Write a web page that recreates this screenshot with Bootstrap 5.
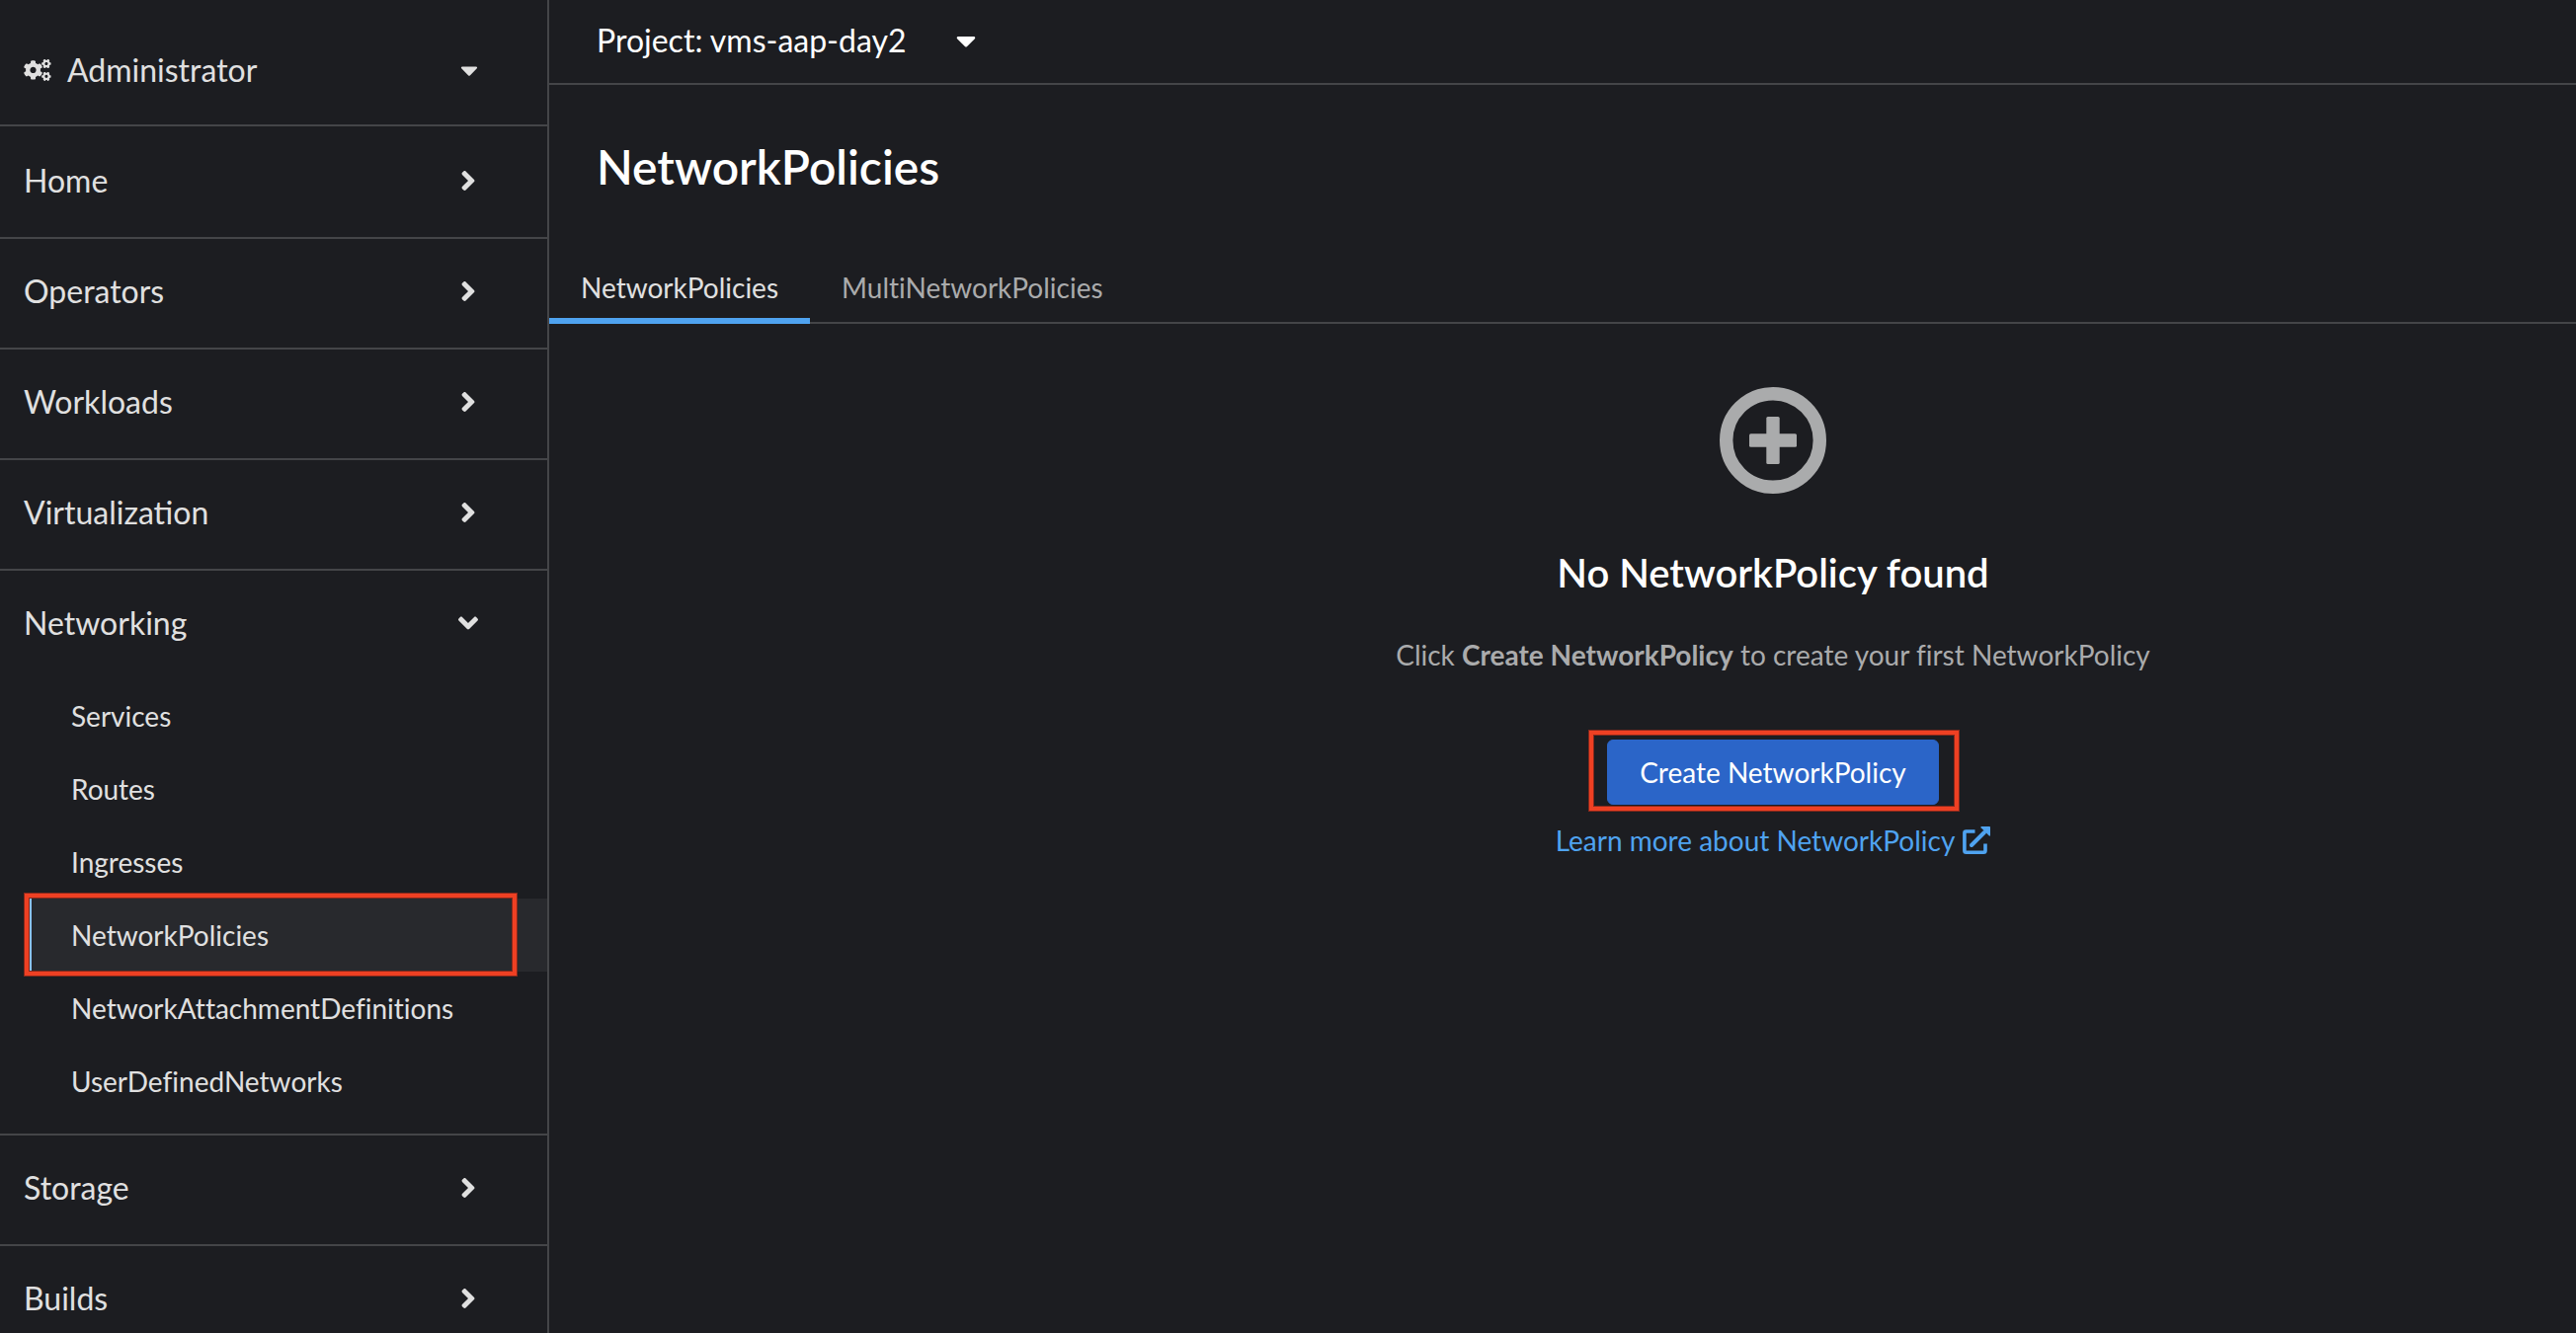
<!DOCTYPE html>
<html lang="en">
<head>
<meta charset="utf-8">
<meta name="viewport" content="width=device-width, initial-scale=1">
<title>NetworkPolicies</title>
<link href="https://cdn.jsdelivr.net/npm/bootstrap@5.3.0/dist/css/bootstrap.min.css" rel="stylesheet">
<style>
  :root {
    --console-bg: #1c1d21;
    --console-active: #28292d;
    --console-line: #444548;
    --console-text: #e0e0e0;
    --console-muted: #aaabac;
    --console-link: #4fa3f0;
    --console-primary: #2b65c8;
    --console-callout: #ee4023;
    --console-callout-edge: #86291c;
  }
  body {
    background: var(--console-bg);
    color: var(--console-text);
    font-family: Lato, "Liberation Sans", sans-serif;
    font-variant-ligatures: none;
    font-size: 28px;
    line-height: 42px;
  }
  svg { display: block; fill: currentColor; flex: none; }

  .side-panel { width: 556px; border-right: 2px solid var(--console-line); }
  .side-toggle {
    color: inherit;
    font-size: 32px;
    line-height: 48px;
    padding: 29px 70px 33px 24px;
    background: none;
    border: 0;
  }
  .perspective-toggle {
    padding-top: 47px;
    padding-bottom: 31px;
    border-bottom: 2px solid var(--console-line);
  }
  .perspective-name { gap: 16px; }
  .side-menu { padding-top: 2px; }
  .side-section { border-bottom: 2px solid var(--console-line); }
  .side-slot { width: 20px; }
  .side-sub { padding: 0 0 16px 24px; }
  .side-link {
    color: inherit;
    padding: 16px 0 16px 40px;
    border-left: 8px solid transparent;
  }
  .side-link.active { background: var(--console-active); border-color: #8bc1f7; }

  /* red frame drawn over a control */
  .callout-frame { position: relative; }
  .callout-frame::after {
    content: "";
    position: absolute;
    inset: -10px -21px -7px -19px;
    border: 4px solid var(--console-callout);
    box-shadow: 0 0 0 1px var(--console-callout-edge), inset 0 0 0 1px var(--console-callout-edge);
    pointer-events: none;
    z-index: 1;
  }
  .side-link.callout-frame::after { inset: -5px 31px -4px -7px; }

  .project-bar { padding: 17px 48px 19px; border-bottom: 2px solid var(--console-line); }
  .project-toggle { font-size: 32px; line-height: 48px; gap: 50px; background: none; border: 0; }
  .page-head { padding: 53px 48px; }
  .page-head h1 { font-size: 48px; line-height: 60px; font-weight: 600; }
  .page-tabs { border-bottom: 2px solid var(--console-line); }
  .page-tabs .nav-link {
    color: var(--console-muted);
    padding: 18px 32px 10px;
    margin-bottom: -2px;
    border: 0;
    border-bottom: 6px solid transparent;
    border-radius: 0;
  }
  .page-tabs .nav-link.active { color: var(--console-text); border-color: var(--console-link); }

  .empty-area { padding: 64px 0 64px 426px; }
  .empty-area h2 { font-size: 40px; line-height: 52px; font-weight: 600; margin: 54px 0 36px; }
  .empty-text { color: var(--console-muted); }
  .create-btn {
    --bs-btn-bg: var(--console-primary);
    --bs-btn-border-color: var(--console-primary);
    --bs-btn-padding-x: 32px;
    --bs-btn-padding-y: 11px;
    --bs-btn-font-size: 28px;
    --bs-btn-line-height: 42px;
    --bs-btn-border-radius: 6px;
    margin: 65px 0 15px;
  }
  .more-link { color: var(--console-link); gap: 8px; }
</style>
</head>
<body class="vh-100 overflow-hidden d-flex">

<svg class="d-none" aria-hidden="true">
  <symbol id="angle-right" viewBox="0 0 256 512"><path d="M224.300 273l-136 136c-9.400 9.400-24.600 9.400-33.900 0l-22.600-22.600c-9.400-9.400-9.400-24.600 0-33.900l96.400-96.400-96.400-96.400c-9.400-9.400-9.400-24.600 0-33.900L54.300 103c9.400-9.400 24.600-9.400 33.900 0l136 136c9.500 9.400 9.500 24.600.1 34z"/></symbol>
  <symbol id="angle-down" viewBox="0 0 320 512"><path d="M143 352.300L7 216.300c-9.400-9.400-9.400-24.600 0-33.900l22.600-22.600c9.400-9.400 24.600-9.400 33.900 0l96.400 96.400 96.400-96.400c9.400-9.400 24.600-9.400 33.900 0l22.600 22.600c9.400 9.400 9.400 24.600 0 33.900l-136 136c-9.200 9.400-24.400 9.400-33.800 0z"/></symbol>
  <symbol id="caret-down" viewBox="0 0 320 512"><path d="M31.300 192h257.300c17.800 0 26.700 21.500 14.100 34.100L174.100 354.700c-7.800 7.800-20.500 7.800-28.300 0L17.200 226.100C4.600 213.500 13.500 192 31.300 192z"/></symbol>
  <symbol id="small-cog" viewBox="0 0 640 512"><path d="M512.100 191l-8.200 14.300c-3 5.300-9.400 7.500-15.100 5.400-11.800-4.400-22.600-10.700-32.100-18.600-4.600-3.800-5.800-10.500-2.800-15.700l8.200-14.300c-6.900-8-12.300-17.300-15.900-27.400h-16.500c-6 0-11.200-4.300-12.200-10.300-2-12-2.100-24.600 0-37.100 1-6 6.200-10.400 12.200-10.400h16.500c3.600-10.100 9-19.400 15.900-27.400l-8.200-14.300c-3-5.200-1.900-11.900 2.800-15.700 9.500-7.900 20.400-14.200 32.100-18.600 5.700-2.100 12.100.1 15.100 5.400l8.200 14.300c10.500-1.900 21.200-1.900 31.700 0L552 6.300c3-5.300 9.400-7.500 15.100-5.400 11.800 4.400 22.600 10.700 32.100 18.600 4.600 3.800 5.800 10.500 2.800 15.700l-8.200 14.300c6.900 8 12.300 17.300 15.900 27.400h16.500c6 0 11.200 4.300 12.200 10.300 2 12 2.100 24.600 0 37.100-1 6-6.200 10.400-12.200 10.400h-16.500c-3.600 10.100-9 19.400-15.900 27.400l8.200 14.300c3 5.200 1.900 11.900-2.800 15.700-9.500 7.900-20.400 14.200-32.100 18.600-5.700 2.100-12.100-.1-15.100-5.400l-8.200-14.300c-10.400 1.900-21.200 1.900-31.700 0zm-10.500-58.800c38.500 29.600 82.400-14.300 52.800-52.800-38.500-29.700-82.400 14.300-52.800 52.800z"/></symbol>
</svg>

<aside class="side-panel vh-100 overflow-hidden flex-shrink-0">
  <button type="button" class="side-toggle perspective-toggle w-100 d-flex align-items-center justify-content-between">
    <span class="perspective-name d-flex align-items-center">
      <svg width="28" height="22" viewBox="0 0 640 512" aria-hidden="true">
        <path d="M386.300 286.100l33.700 16.800c10.100 5.800 14.500 18.100 10.500 29.100-8.900 24.200-26.400 46.400-42.600 65.800-7.400 8.900-20.200 11.100-30.300 5.300l-29.100-16.800c-16 13.700-34.600 24.600-54.900 31.700v33.600c0 11.600-8.300 21.600-19.700 23.600-24.600 4.200-50.400 4.400-75.900 0-11.500-2-20-11.900-20-23.600V418c-20.300-7.200-38.900-18-54.900-31.700L74 403c-10 5.800-22.900 3.600-30.300-5.300-16.200-19.400-33.300-41.600-42.200-65.700-4-10.900.4-23.200 10.500-29.100l33.300-16.800c-3.900-20.900-3.900-42.400 0-63.400L12 205.800c-10.100-5.800-14.600-18.100-10.500-29 8.900-24.200 26-46.400 42.200-65.800 7.400-8.900 20.200-11.100 30.300-5.300l29.100 16.800c16-13.700 34.600-24.600 54.900-31.700V57.100c0-11.500 8.200-21.500 19.600-23.500 24.600-4.200 50.500-4.400 76-.1 11.500 2 20 11.900 20 23.600v33.600c20.300 7.200 38.900 18 54.900 31.700l29.100-16.800c10-5.800 22.900-3.600 30.300 5.300 16.200 19.400 33.200 41.600 42.100 65.800 4 10.900.1 23.200-10 29.100l-33.700 16.800c3.900 21 3.900 42.500 0 63.500zm-117.600 21.100c59.200-77-28.700-164.900-105.700-105.700-59.200 77 28.700 164.900 105.700 105.700z"/>
        <use href="#small-cog" width="640" height="512"/>
        <use href="#small-cog" width="640" height="512" y="299"/>
      </svg>
      Administrator
    </span>
    <svg width="18" height="28" aria-hidden="true"><use href="#caret-down"/></svg>
  </button>

  <nav class="side-menu" aria-label="Main">
    <div class="side-section">
      <button type="button" class="side-toggle w-100 d-flex align-items-center justify-content-between">Home
        <svg class="side-slot" height="32" aria-hidden="true"><use href="#angle-right"/></svg></button>
    </div>
    <div class="side-section">
      <button type="button" class="side-toggle w-100 d-flex align-items-center justify-content-between">Operators
        <svg class="side-slot" height="32" aria-hidden="true"><use href="#angle-right"/></svg></button>
    </div>
    <div class="side-section">
      <button type="button" class="side-toggle w-100 d-flex align-items-center justify-content-between">Workloads
        <svg class="side-slot" height="32" aria-hidden="true"><use href="#angle-right"/></svg></button>
    </div>
    <div class="side-section">
      <button type="button" class="side-toggle w-100 d-flex align-items-center justify-content-between">Virtualization
        <svg class="side-slot" height="32" aria-hidden="true"><use href="#angle-right"/></svg></button>
    </div>
    <div class="side-section">
      <button type="button" class="side-toggle w-100 d-flex align-items-center justify-content-between" aria-expanded="true">Networking
        <svg class="side-slot" height="32" aria-hidden="true"><use href="#angle-down"/></svg></button>
      <div class="side-sub d-flex flex-column">
        <a href="#" class="side-link text-decoration-none">Services</a>
        <a href="#" class="side-link text-decoration-none">Routes</a>
        <a href="#" class="side-link text-decoration-none">Ingresses</a>
        <a href="#" class="side-link text-decoration-none active callout-frame" aria-current="page">NetworkPolicies</a>
        <a href="#" class="side-link text-decoration-none">NetworkAttachmentDefinitions</a>
        <a href="#" class="side-link text-decoration-none">UserDefinedNetworks</a>
      </div>
    </div>
    <div class="side-section">
      <button type="button" class="side-toggle w-100 d-flex align-items-center justify-content-between">Storage
        <svg class="side-slot" height="32" aria-hidden="true"><use href="#angle-right"/></svg></button>
    </div>
    <div class="side-section">
      <button type="button" class="side-toggle w-100 d-flex align-items-center justify-content-between">Builds
        <svg class="side-slot" height="32" aria-hidden="true"><use href="#angle-right"/></svg></button>
    </div>
  </nav>
</aside>

<main class="flex-grow-1">
  <div class="project-bar">
    <button type="button" class="project-toggle d-flex align-items-center p-0 text-white">
      Project: vms-aap-day2
      <svg width="20" height="32" aria-hidden="true"><use href="#caret-down"/></svg>
    </button>
  </div>

  <header class="page-head">
    <h1 class="m-0 text-white">NetworkPolicies</h1>
  </header>
  <ul class="nav page-tabs">
    <li class="nav-item"><a class="nav-link active" aria-current="page" href="#">NetworkPolicies</a></li>
    <li class="nav-item"><a class="nav-link" href="#">MultiNetworkPolicies</a></li>
  </ul>

  <section class="empty-area d-flex flex-column align-items-center text-center">
    <svg class="empty-text" width="108" height="108" viewBox="0 0 108 108" aria-hidden="true">
      <circle cx="54" cy="54" r="47.300" fill="none" stroke="currentColor" stroke-width="13.400"/>
      <rect x="30" y="47.300" width="48" height="13.400" rx="1.500"/>
      <rect x="47.300" y="30" width="13.400" height="48" rx="1.500"/>
    </svg>
    <h2 class="text-white">No NetworkPolicy found</h2>
    <p class="empty-text m-0">Click <strong>Create NetworkPolicy</strong> to create your first NetworkPolicy</p>
    <button type="button" class="btn btn-primary create-btn callout-frame">Create NetworkPolicy</button>
    <a href="#" class="more-link d-flex align-items-center text-decoration-none">Learn more about NetworkPolicy
      <svg width="28" height="28" viewBox="0 0 28 28" aria-hidden="true">
        <path d="M12.500 5H3.500Q1.900 5 1.900 6.600V24.500Q1.900 26.200 3.500 26.200H21.300Q23 26.200 23 24.500V17.500" fill="none" stroke="currentColor" stroke-width="3.600"/>
        <path d="M9 19L22 6" fill="none" stroke="currentColor" stroke-width="4" stroke-linecap="round"/>
        <path d="M18.800 0H27.200Q28 0 28 .8V9.200Q27.400 10 26.600 9.300L18.600 1.300Q18.200.5 18.800 0Z"/>
      </svg>
    </a>
  </section>
</main>

<script src="https://cdn.jsdelivr.net/npm/bootstrap@5.3.0/dist/js/bootstrap.bundle.min.js"></script>
</body>
</html>
